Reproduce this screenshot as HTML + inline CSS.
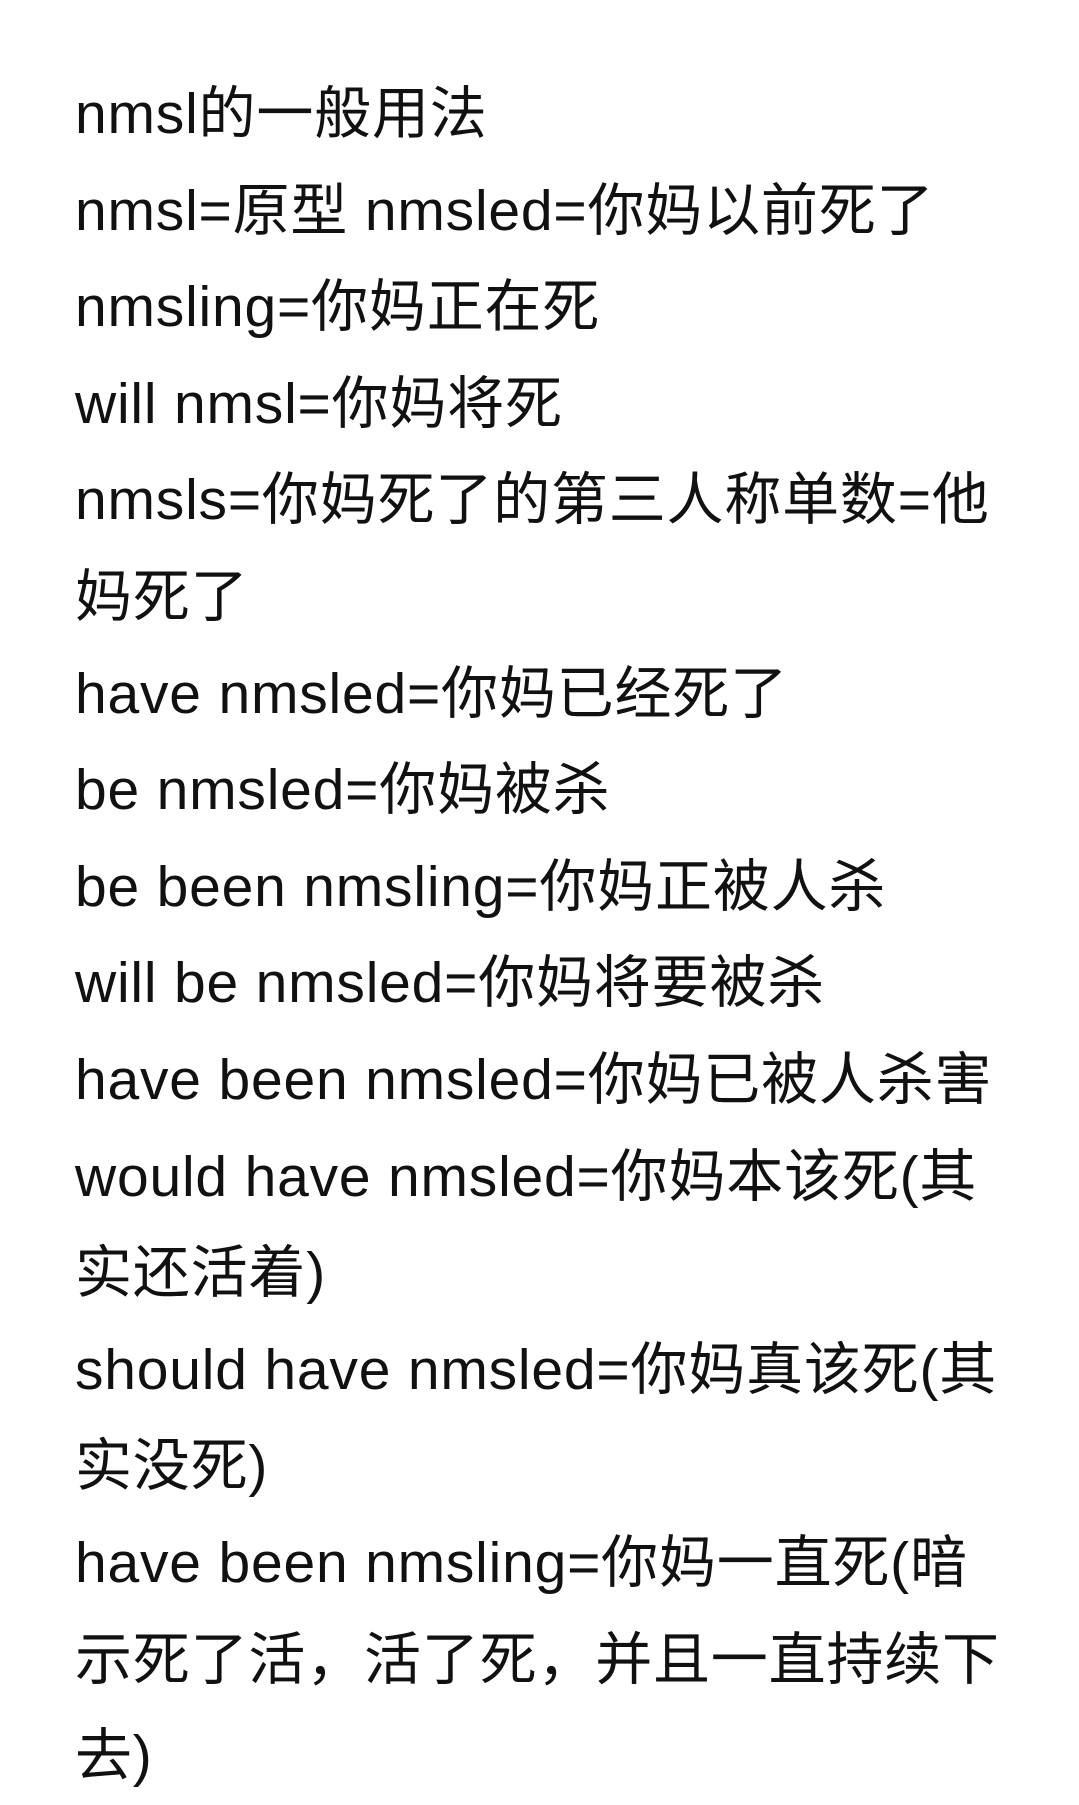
<!DOCTYPE html>
<html><head><meta charset="utf-8"><style>
html,body{margin:0;padding:0;background:#fff;}
body{width:1079px;height:1786px;overflow:hidden;}
.t{position:absolute;left:75px;top:66px;font-family:"Liberation Sans","Noto Sans CJK SC",sans-serif;font-size:57px;letter-spacing:0.8px;line-height:96.6px;color:#111;white-space:nowrap;}
</style></head><body>
<div class="t">nmsl的一般用法<br>
nmsl=原型 nmsled=你妈以前死了<br>
nmsling=你妈正在死<br>
will nmsl=你妈将死<br>
nmsls=你妈死了的第三人称单数=他<br>
妈死了<br>
have nmsled=你妈已经死了<br>
be nmsled=你妈被杀<br>
be been nmsling=你妈正被人杀<br>
will be nmsled=你妈将要被杀<br>
have been nmsled=你妈已被人杀害<br>
would have nmsled=你妈本该死(其<br>
实还活着)<br>
should have nmsled=你妈真该死(其<br>
实没死)<br>
have been nmsling=你妈一直死(暗<br>
示死了活，活了死，并且一直持续下<br>
去)</div>
</body></html>
